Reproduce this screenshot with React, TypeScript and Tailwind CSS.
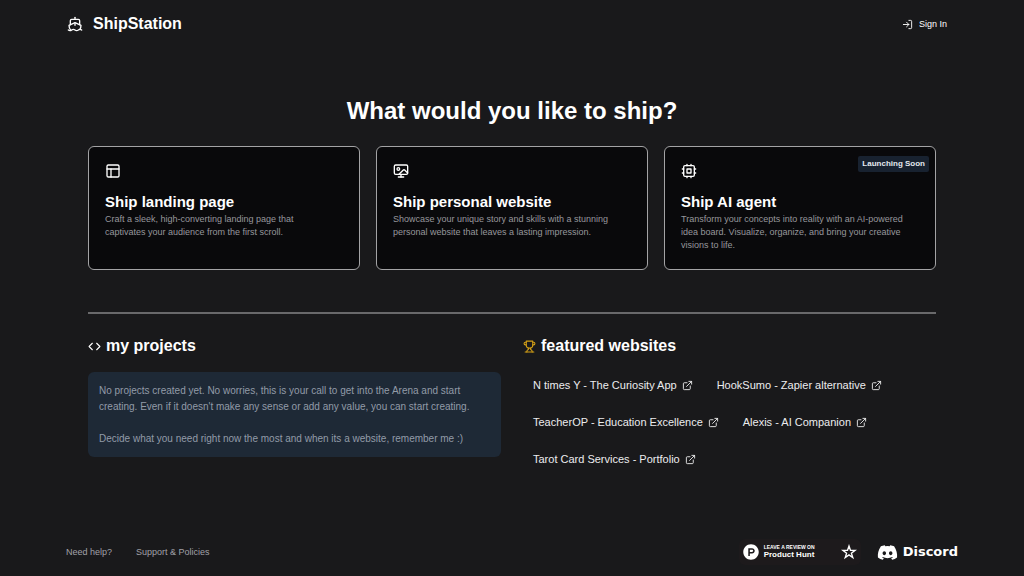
import type { ReactNode } from "react";
import { Code, ExternalLink, LogIn, PanelsTopLeft, Ship, Wallpaper } from "lucide-react";
import { FaDiscord, FaProductHunt } from "react-icons/fa";

type Card = { title: string; text: string; icon: ReactNode; badge?: string };

function ChipIcon() {
  return (
    <svg
      viewBox="0 0 24 24"
      className="size-4"
      fill="none"
      stroke="currentColor"
      strokeWidth="2"
      strokeLinecap="round"
      strokeLinejoin="round"
      aria-hidden="true"
    >
      <rect x="4" y="4" width="16" height="16" rx="2" />
      <rect x="9" y="9" width="6" height="6" />
      <path d="M15 2v2M15 20v2M2 15h2M2 9h2M20 15h2M20 9h2M9 2v2M9 20v2" />
    </svg>
  );
}

function TrophyIcon() {
  return (
    <svg
      viewBox="0 0 24 24"
      className="size-[13px] text-[#d4a017]"
      fill="none"
      stroke="currentColor"
      strokeWidth="2"
      strokeLinecap="round"
      strokeLinejoin="round"
      aria-hidden="true"
    >
      <path d="M6 9H4.500a2.500 2.500 0 0 1 0-5H6M18 9h1.500a2.500 2.500 0 0 0 0-5H18M4 22h16" />
      <path d="M10 14.660V17c0 .55-.47.98-.97 1.210C7.850 18.750 7 20.240 7 22" />
      <path d="M14 14.660V17c0 .55.47.98.97 1.210C16.150 18.750 17 20.240 17 22" />
      <path d="M18 2H6v7a6 6 0 0 0 12 0V2Z" />
    </svg>
  );
}

const cards: Card[] = [
  {
    title: "Ship landing page",
    text: "Craft a sleek, high-converting landing page that captivates your audience from the first scroll.",
    icon: <PanelsTopLeft size={16} />,
  },
  {
    title: "Ship personal website",
    text: "Showcase your unique story and skills with a stunning personal website that leaves a lasting impression.",
    icon: <Wallpaper size={16} />,
  },
  {
    title: "Ship AI agent",
    text: "Transform your concepts into reality with an AI-powered idea board. Visualize, organize, and bring your creative visions to life.",
    icon: <ChipIcon />,
    badge: "Launching Soon",
  },
];

const sites = [
  "N times Y - The Curiosity App",
  "HookSumo - Zapier alternative",
  "TeacherOP - Education Excellence",
  "Alexis - AI Companion",
  "Tarot Card Services - Portfolio",
];

function ShipCard({ title, text, icon, badge }: Card) {
  return (
    <a
      href="#"
      className="relative block min-h-[124px] rounded-md border border-[#a3a3a5] bg-[#09090b] px-4 pt-4 pb-3"
    >
      {icon}
      <h2 className="mt-3 text-[15px] leading-[22px] font-bold">{title}</h2>
      <p className="pr-3 text-[9px] leading-[13px] text-[#97979c]">{text}</p>
      {badge && (
        <span className="absolute top-[9px] right-[6px] rounded-xs bg-[#182230] px-1 text-[8px] leading-4 font-bold text-[#e4e9ef]">
          {badge}
        </span>
      )}
    </a>
  );
}

export default function App() {
  return (
    <div className="flex min-h-screen flex-col bg-[#19191b] font-['Liberation_Sans',Arial,sans-serif] text-white">
      <header className="flex h-12 items-center justify-between pr-[77px] pl-[67px]">
        <a href="#" className="flex items-center gap-[10px] text-[16px] leading-5 font-bold">
          <Ship size={16} />
          ShipStation
        </a>
        <button className="flex items-center gap-[6px] text-[9px] leading-4">
          <LogIn size={11} />
          Sign In
        </button>
      </header>

      <main className="px-[88px] pt-[47px]">
        <h1 className="text-center text-[24px] leading-8 font-bold">What would you like to ship?</h1>
        <div className="mt-[19px] grid grid-cols-3 gap-4">
          {cards.map((card) => (
            <ShipCard key={card.title} {...card} />
          ))}
        </div>
        <hr className="mt-[42px] border-t-2 border-[#69696b]" />

        <div className="grid grid-cols-2 gap-[22px] pt-[22px]">
          <section>
            <h2 className="flex items-center gap-[5px] text-[16px] leading-5 font-bold">
              <Code size={13} />
              my projects
            </h2>
            <div className="mt-4 rounded-md bg-[#1e2936] px-[11px] pt-[11px] pb-[10px] text-[10px] leading-4 text-[#929ba8]">
              <p>
                No projects created yet. No worries, this is your call to get into the Arena and start creating. Even if
                it doesn't make any sense or add any value, you can start creating.
              </p>
              <p className="mt-4">
                Decide what you need right now the most and when its a website, remember me :)
              </p>
            </div>
          </section>
          <section>
            <h2 className="flex items-center gap-[5px] text-[16px] leading-5 font-bold">
              <TrophyIcon />
              featured websites
            </h2>
            <ul className="mt-[21px] flex flex-wrap gap-x-6 gap-y-[21px] pl-[10px]">
              {sites.map((site) => (
                <li key={site}>
                  <a href="#" className="flex items-center gap-[5px] text-[11px] leading-4 text-[#ececee]">
                    {site}
                    <ExternalLink size={11} />
                  </a>
                </li>
              ))}
            </ul>
          </section>
        </div>
      </main>

      <footer className="mt-auto flex items-center justify-between px-[66px] pb-[11px]">
        <nav className="flex gap-6 text-[9px] leading-4 text-[#a1a1a8]">
          <a href="#">Need help?</a>
          <a href="#">Support &amp; Policies</a>
        </nav>
        <div className="flex items-center gap-4">
          <a href="#" className="flex h-[26px] w-[122px] items-center rounded-md bg-[#1d1a1c] pr-1 pl-1">
            <FaProductHunt size={16} />
            <span className="ml-[5px] flex flex-1 flex-col font-bold">
              <span className="text-[5px] leading-[6px]">LEAVE A REVIEW ON</span>
              <span className="text-[8px] leading-[10px]">Product Hunt</span>
            </span>
            <svg viewBox="0 0 24 24" className="size-4" fill="none" stroke="currentColor" strokeWidth="2" aria-hidden="true">
              <path d="M12 3l2.200 6.500h7L15.600 13.700l2.100 6.700L12 16.400l-5.700 4 2.100-6.700L2.800 9.500h7z" />
            </svg>
          </a>
          <a
            href="#"
            className="flex items-center gap-[5px] font-['DejaVu_Sans',Verdana,sans-serif] text-[13px] leading-4 font-bold"
          >
            <FaDiscord size={21} />
            Discord
          </a>
        </div>
      </footer>
    </div>
  );
}
